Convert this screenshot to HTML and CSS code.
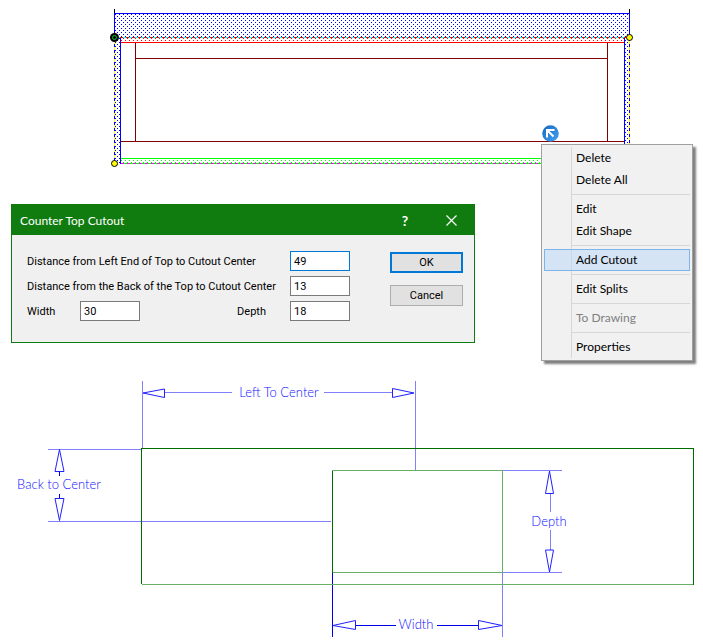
FILE: index.html
```html
<!DOCTYPE html>
<html lang="en">
<head>
<meta charset="utf-8">
<title>Counter Top Cutout</title>
<link rel="stylesheet" href="styles.css">
</head>
<body>
<main class="page">
  <section class="plan">
    <svg class="figure" viewBox="0 0 703 180" role="img" aria-label="Counter top plan view">
      <defs>
        <pattern id="dots-blue" width="4" height="4" patternUnits="userSpaceOnUse"><path d="M1 0h1v1h-1zM3 2h1v1h-1z" fill="#00f"/></pattern>
        <pattern id="dots-red" width="4" height="4" patternUnits="userSpaceOnUse"><path d="M1 0h1v1h-1zM3 2h1v1h-1z" fill="#f00"/></pattern>
        <pattern id="dots-green" width="4" height="4" patternUnits="userSpaceOnUse"><path d="M1 0h1v1h-1zM3 2h1v1h-1z" fill="#0f0"/></pattern>
        <linearGradient id="ball" x1="0" y1="0" x2="1" y2="1"><stop offset="0" stop-color="#1565c0"/><stop offset="1" stop-color="#45a5f5"/></linearGradient>
      </defs>
      <g shape-rendering="crispEdges">
        <path d="M115 14h514v23h-514zM115 38h5v125h-5zM625 38h4v125h-4z" fill="url(#dots-blue)"/>
        <path d="M121 38h503v4h-503z" fill="url(#dots-red)"/>
        <path d="M121 159h503v4h-503z" fill="url(#dots-green)"/>
        <path class="line dark-red" d="M135.5 43v98M607.5 43v98M135 58.5h473M121 141.5h503"/>
        <path class="line red" d="M121 42.5h503"/>
        <path class="line green" d="M121 158.5h503"/>
        <path class="line blue" d="M114.5 13v24M629.5 13v24M114 13.5h516M120.5 37v126M624.5 37v126"/>
        <path class="line black" d="M114.5 9v4M629.5 9v4"/>
        <path class="line cyan" d="M114 37.5h516"/>
        <path class="line red dash" d="M114 37.5h516"/>
        <path class="line yellow" d="M114.5 38v126M629.5 38v126"/>
        <path class="line blue dash" d="M114.5 38v126M629.5 38v126M114 163.5h7"/>
        <path class="line green" d="M121 163.5h508"/>
        <path class="line magenta dash" d="M121 163.5h508"/>
      </g>
      <circle cx="114.500" cy="37.500" r="4.500" fill="#000"/>
      <circle cx="114.500" cy="37.500" r="2" fill="#000" stroke="#0c3"/>
      <circle cx="629.500" cy="37.500" r="3" fill="#ff0" stroke="#000"/>
      <circle cx="114.500" cy="163.500" r="3" fill="#ff0" stroke="#000"/>
      <circle cx="550.500" cy="133.500" r="8.300" fill="url(#ball)"/>
      <path d="M547 137.500v-7.500h7.500M547.500 130.500l6 6" fill="none" stroke="#fff" stroke-width="2"/>
    </svg>
    <menu class="menu">
      <li><button type="button">Delete</button></li>
      <li><button type="button">Delete All</button></li>
      <li class="sep"></li>
      <li><button type="button">Edit</button></li>
      <li><button type="button">Edit Shape</button></li>
      <li class="sep"></li>
      <li><button type="button" class="active">Add Cutout</button></li>
      <li class="sep"></li>
      <li><button type="button">Edit Splits</button></li>
      <li class="sep"></li>
      <li><button type="button" disabled>To Drawing</button></li>
      <li class="sep"></li>
      <li><button type="button">Properties</button></li>
    </menu>
  </section>

  <section class="dialog" role="dialog" aria-labelledby="dialog-title">
    <header class="titlebar">
      <h1 id="dialog-title">Counter Top Cutout</h1>
      <button type="button" class="caption">?</button>
      <button type="button" class="caption" aria-label="Close"><svg width="11" height="11" viewBox="0 0 11 11"><path d="M.5.5l10 10M10.500.5l-10 10" stroke="#fff" stroke-width="1.200"/></svg></button>
    </header>
    <form class="form">
      <div class="fields">
        <label class="wide" for="left">Distance from Left End of Top to Cutout Center</label>
        <input id="left" class="focused" value="49">
        <label class="wide" for="back">Distance from the Back of the Top to Cutout Center</label>
        <input id="back" value="13">
        <label for="width">Width</label>
        <input id="width" value="30">
        <label class="depth" for="depth">Depth</label>
        <input id="depth" value="18">
      </div>
      <div class="actions">
        <button type="button" class="default">OK</button>
        <button type="button">Cancel</button>
      </div>
    </form>
  </section>

  <section class="dimensions">
    <svg class="figure" viewBox="0 370 703 272" role="img" aria-label="Cutout dimensions">
      <g shape-rendering="crispEdges">
        <path class="line pale-blue" d="M142.500 381v67M415.500 381v89M147 392.500h85M324 392.500h88M48 449.500h93M48 521.500h283M503 470.500h59M503 572.500h59M550.500 493v19M550.500 530v20M502.500 573v64"/>
        <path class="line deep-blue" d="M332.500 573v64M355 625.500h41M437 625.500h41M59.500 471v5M59.500 494v5"/>
        <path class="line pale-green" d="M142 584.500h552M332 470.500h171M332 572.500h171M502.500 470v103"/>
        <path class="line deep-green" d="M141.500 584v-136M141 448.500h553M693.500 448v137M332.500 471v102"/>
      </g>
      <path class="arrow" d="M143 393l21.500-4v8.500zM414 393l-21.500-4.500v9zM59.500 449.500l-4.500 22h9zM59.500 520.500l-4.500-22h9zM549.500 471l-4 22.500h8zM549.500 572l-4-22h8zM333 625.500l22.500-5v9zM502 625.500l-23.500-5v9z"/>
      <g class="caption-text">
        <text x="279" y="397">Left To Center</text>
        <text x="59" y="489">Back to Center</text>
        <text x="549" y="526">Depth</text>
        <text x="416" y="629">Width</text>
      </g>
    </svg>
  </section>
</main>
</body>
</html>
```
FILE: styles.css
```css
* { box-sizing: border-box; }

body {
  margin: 0;
  background: #fff;
  color: #000;
  font-family: Roboto, "Liberation Sans", sans-serif;
  font-size: 11px;
}

button, input { font: inherit; color: inherit; margin: 0; }

.page {
  display: flex;
  flex-direction: column;
}

.figure { display: block; width: 100%; height: auto; }

/* Drawing lines */
.line { fill: none; stroke-width: 1; }
.dash { stroke-dasharray: 3 3; }
.black { stroke: #000; }
.blue { stroke: #00f; }
.red { stroke: #f00; }
.dark-red { stroke: #800000; }
.green { stroke: #0f0; }
.cyan { stroke: #0ff; }
.yellow { stroke: #ff0; }
.magenta { stroke: #f0f; }
.pale-blue { stroke: #8080ff; }
.deep-blue { stroke: #0000f0; }
.pale-green { stroke: #68b068; }
.deep-green { stroke: #006c00; }
.arrow { fill: #fff; stroke: #2020ff; stroke-width: 1; }

.caption-text {
  font-family: Lato, sans-serif;
  font-size: 13px;
  fill: #1010ff;
  text-anchor: middle;
  font-weight: 300;
}

/* Context menu */
.plan { position: relative; margin-bottom: 24px; }

.menu {
  position: absolute;
  z-index: 1;
  top: 144px;
  left: 541px;
  width: 152px;
  margin: 0;
  padding: 2px;
  list-style: none;
  border: 1px solid #a0a0a0;
  background: linear-gradient(90deg, transparent 29px, #d7d7d7 29px, #d7d7d7 30px, transparent 30px) 0 2px / 100% calc(100% - 4px) no-repeat #f1f1f1;
  box-shadow: 3px 3px 2px rgba(0, 0, 0, 0.5);
  font-family: Lato, "Open Sans", sans-serif;
  font-size: 12px;
}

.menu button {
  display: block;
  width: 100%;
  height: 22px;
  padding: 0 0 0 31px;
  border: 1px solid transparent;
  background: transparent;
  text-align: left;
  line-height: 20px;
}

.menu button:disabled { color: #808080; }

.menu .active {
  border-color: #7eb4ea;
  background: rgba(184, 216, 249, 0.5);
}

.menu .sep {
  height: 1px;
  margin: 3px 0 3px 28px;
  background: #d7d7d7;
}

/* Dialog */
.dialog {
  width: calc(100% - 22px);
  max-width: 464px;
  margin: 0 11px 27px;
  border: 1px solid #107c10;
  background: #f0f0f0;
}

.titlebar {
  display: flex;
  align-items: center;
  height: 30px;
  padding-left: 8px;
  background: #107c10;
  color: #fff;
  font-family: Lato, "Open Sans", sans-serif;
  font-size: 12px;
}

.titlebar h1 {
  flex: 1;
  margin: 0;
  font-size: 12px;
  font-weight: 400;
}

.caption {
  display: grid;
  place-items: center;
  width: 46px;
  height: 28px;
  padding: 0;
  border: 0;
  background: transparent;
  font-size: 14px;
  font-weight: 700;
}

.form {
  display: flex;
  gap: 40px;
  padding: 16px 11px 21px 15px;
}

.fields {
  flex: 1;
  display: grid;
  grid-template-columns: 53px 60px 1fr 60px;
  grid-auto-rows: 20px;
  row-gap: 5px;
  align-items: center;
}

.fields label { white-space: nowrap; }
.fields .wide { grid-column: span 3; }
.fields .depth { justify-self: end; padding-right: 24px; }

.fields input {
  width: 60px;
  height: 20px;
  padding: 0 3px;
  border: 1px solid #7a7a7a;
  border-radius: 0;
  background: #fff;
  font-size: 11px;
}

.fields .focused { border-color: #0078d7; }

.actions {
  display: flex;
  flex-direction: column;
  gap: 12px;
  padding-top: 1px;
}

.actions button {
  width: 73px;
  height: 21px;
  padding: 0;
  border: 1px solid #adadad;
  background: #e1e1e1;
}

.actions .default { border: 2px solid #0078d7; }
```
